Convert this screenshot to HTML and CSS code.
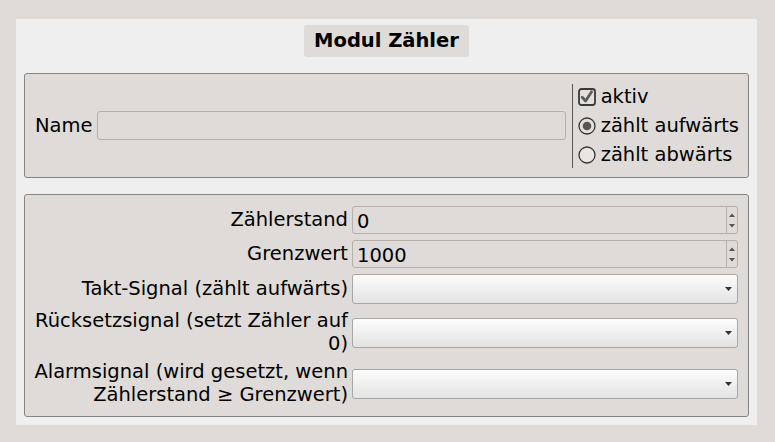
FILE: index.html
```html
<!DOCTYPE html>
<html lang="de">
<head>
<meta charset="utf-8">
<title>Modul Zähler</title>
<link rel="stylesheet" href="styles.css">
</head>
<body>
<div class="window">
  <div class="panel">
    <div class="title-row"><h1 class="title">Modul Zähler</h1></div>

    <section class="group group-top">
      <span class="name-label">Name</span>
      <div class="text-input"></div>
      <div class="vsep"></div>
      <div class="options">
        <div class="opt">
          <span class="ind">
            <svg width="18" height="18" viewBox="0 0 18 18">
              <rect x="1" y="1" width="16" height="16" rx="2.5" fill="#e4e0dd" stroke="#3a3a3a" stroke-width="1.8"/>
              <path d="M4.2 9.2 L7.6 13 L13.6 3.8" fill="none" stroke="#5e5e5e" stroke-width="2.8" stroke-linecap="round" stroke-linejoin="round"/>
            </svg>
          </span>
          <span>aktiv</span>
        </div>
        <div class="opt">
          <span class="ind">
            <svg width="18" height="18" viewBox="0 0 18 18">
              <circle cx="9" cy="9" r="8" fill="#e4e0dd" stroke="#333" stroke-width="1.3"/>
              <circle cx="9" cy="9" r="4.3" fill="#555"/>
            </svg>
          </span>
          <span>zählt aufwärts</span>
        </div>
        <div class="opt">
          <span class="ind">
            <svg width="18" height="18" viewBox="0 0 18 18">
              <circle cx="9" cy="9" r="8" fill="#e8e5e2" stroke="#333" stroke-width="1.3"/>
            </svg>
          </span>
          <span>zählt abwärts</span>
        </div>
      </div>
    </section>

    <section class="group group-form">
      <span class="flabel">Zählerstand</span>
      <div class="spin">
        <span class="spin-value">0</span>
        <span class="spin-buttons">
          <svg width="6" height="4" viewBox="0 0 6 4"><path d="M0 4 L3 0.5 L6 4 Z" fill="#555"/></svg>
          <svg width="6" height="4" viewBox="0 0 6 4"><path d="M0 0 L6 0 L3 3.5 Z" fill="#555"/></svg>
        </span>
      </div>

      <span class="flabel">Grenzwert</span>
      <div class="spin">
        <span class="spin-value">1000</span>
        <span class="spin-buttons">
          <svg width="6" height="4" viewBox="0 0 6 4"><path d="M0 4 L3 0.5 L6 4 Z" fill="#555"/></svg>
          <svg width="6" height="4" viewBox="0 0 6 4"><path d="M0 0 L6 0 L3 3.5 Z" fill="#555"/></svg>
        </span>
      </div>

      <span class="flabel">Takt-Signal (zählt aufwärts)</span>
      <div class="combo">
        <svg width="7" height="4" viewBox="0 0 7 4"><path d="M0 0 L7 0 L3.5 4 Z" fill="#333"/></svg>
      </div>

      <span class="flabel">Rücksetzsignal (setzt Zähler auf 0)</span>
      <div class="combo">
        <svg width="7" height="4" viewBox="0 0 7 4"><path d="M0 0 L7 0 L3.5 4 Z" fill="#333"/></svg>
      </div>

      <span class="flabel">Alarmsignal (wird gesetzt, wenn Zählerstand ≥ Grenzwert)</span>
      <div class="combo">
        <svg width="7" height="4" viewBox="0 0 7 4"><path d="M0 0 L7 0 L3.5 4 Z" fill="#333"/></svg>
      </div>
    </section>
  </div>
</div>
</body>
</html>
```

FILE: styles.css
```css
* {
  box-sizing: border-box;
}

html, body {
  margin: 0;
  padding: 0;
  background: #dfdbd8;
}

body {
  font-family: "DejaVu Sans", "Noto Sans", sans-serif;
  font-size: 19.5px;
  color: #000;
}

.window {
  padding: 19px 18px 17px 16px;
}

.panel {
  background: #efefef;
  height: 406px;
  padding: 6px 8px 8px 8px;
  display: flex;
  flex-direction: column;
}

.title-row {
  display: flex;
  justify-content: center;
}

.title {
  margin: 0;
  height: 32px;
  line-height: 32px;
  padding: 0 10px;
  font-size: 19.5px;
  font-weight: bold;
  background: #dfdbd8;
  border-radius: 3px;
}

.group {
  background: #dfdbd8;
  border: 1px solid #858585;
  border-radius: 3px;
}

.group-top {
  margin-top: 16px;
  height: 105px;
  display: flex;
  align-items: center;
  padding: 0 9px 0 10px;
}

.name-label {
  flex: none;
}

.text-input {
  flex: 1;
  height: 29px;
  margin-left: 4px;
  border: 1px solid #b4b0ac;
  border-radius: 3px;
  background: #dfdbd8;
}

.vsep {
  flex: none;
  width: 1px;
  height: 84px;
  background: #555;
  margin: 0 4px 0 6px;
}

.options {
  display: flex;
  flex-direction: column;
}

.opt {
  height: 29px;
  display: flex;
  align-items: center;
  gap: 4px;
}

.ind {
  width: 20px;
  display: flex;
  align-items: center;
  justify-content: center;
}

.ind svg {
  display: block;
}

.group-form {
  margin-top: 16px;
  height: 223px;
  padding: 11px 10px 10px 2px;
  display: grid;
  grid-template-columns: 321px 1fr;
  column-gap: 4px;
  row-gap: 6px;
  align-items: center;
  align-content: start;
}

.flabel {
  text-align: right;
  line-height: 22.5px;
}

.spin {
  height: 28px;
  display: flex;
  border: 1px solid #b4b0ac;
  border-radius: 3px;
  background: #dfdbd8;
}

.spin-value {
  flex: 1;
  padding-left: 4px;
  line-height: 28px;
  padding-top: 1px;
}

.spin-buttons {
  width: 11px;
  border-left: 1px solid #b4b0ac;
  display: flex;
  flex-direction: column;
  align-items: center;
  justify-content: space-between;
  padding: 6px 0 5px;
}

.spin-buttons svg {
  display: block;
}

.combo {
  height: 30px;
  display: flex;
  align-items: center;
  justify-content: flex-end;
  padding-right: 5px;
  border: 1px solid #aaa6a2;
  border-radius: 3px;
  background: linear-gradient(#fcfcfc, #e3e3e3);
}

.combo svg {
  display: block;
}
```
